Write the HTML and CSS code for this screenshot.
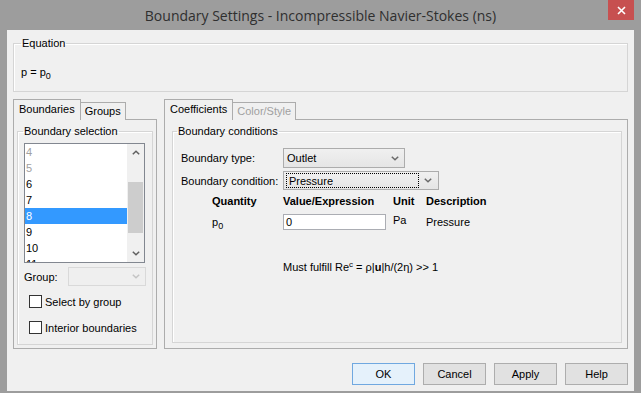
FILE: index.html
```html
<!DOCTYPE html>
<html lang="en">
<head>
    <meta charset="UTF-8">
    <title>Boundary Settings</title>
    <link rel="stylesheet" href="styles.css">
</head>
<body>
<div class="window">
    <div class="titlebar">
        <span class="title">Boundary Settings - Incompressible Navier-Stokes (ns)</span>
        <span class="close">
            <svg width="9" height="9" viewBox="0 0 9 9"><path d="M1 1L8 8M8 1L1 8" stroke="#fff" stroke-width="1.6"/></svg>
        </span>
    </div>

    <div class="client">
        <!-- Equation -->
        <fieldset class="group equation">
            <legend>Equation</legend>
            <div>p = p<sub>0</sub></div>
        </fieldset>

        <div class="panels">
            <!-- Boundaries / Groups -->
            <div class="tabs left">
                <div class="tabbar">
                    <span class="tab active">Boundaries</span>
                    <span class="tab">Groups</span>
                </div>
                <div class="tabpage">
                    <fieldset class="group selection">
                        <legend>Boundary selection</legend>
                        <div class="listbox">
                            <div class="items">
                                <div class="off">4</div>
                                <div class="off">5</div>
                                <div>6</div>
                                <div>7</div>
                                <div class="sel">8</div>
                                <div>9</div>
                                <div>10</div>
                                <div>11</div>
                            </div>
                            <div class="scroll">
                                <span class="sbtn">
                                    <svg width="8" height="5" viewBox="0 0 8 5"><path d="M0.8 4.3L4 1.2L7.2 4.3" fill="none" stroke="#606060" stroke-width="1.5"/></svg>
                                </span>
                                <div class="track"><div class="thumb"></div></div>
                                <span class="sbtn">
                                    <svg width="8" height="5" viewBox="0 0 8 5"><path d="M0.8 0.7L4 3.8L7.2 0.7" fill="none" stroke="#606060" stroke-width="1.5"/></svg>
                                </span>
                            </div>
                        </div>
                        <div class="grouprow">
                            <span>Group:</span>
                            <span class="combo disabled">
                                <span class="arrow">
                                    <svg width="8" height="5" viewBox="0 0 8 5"><path d="M0.8 0.7L4 3.8L7.2 0.7" fill="none" stroke="#c4c4c4" stroke-width="1.5"/></svg>
                                </span>
                            </span>
                        </div>
                        <label class="check"><span class="box"></span>Select by group</label>
                        <label class="check"><span class="box"></span>Interior boundaries</label>
                    </fieldset>
                </div>
            </div>

            <!-- Coefficients / Color/Style -->
            <div class="tabs right">
                <div class="tabbar">
                    <span class="tab active">Coefficients</span>
                    <span class="tab grey">Color/Style</span>
                </div>
                <div class="tabpage">
                    <fieldset class="group conditions">
                        <legend>Boundary conditions</legend>
                        <div class="field">
                            <span class="flabel">Boundary type:</span>
                            <span class="combo type">
                                <span class="value">Outlet</span>
                                <span class="arrow">
                                    <svg width="8" height="5" viewBox="0 0 8 5"><path d="M0.8 0.7L4 3.8L7.2 0.7" fill="none" stroke="#6a6a6a" stroke-width="1.5"/></svg>
                                </span>
                            </span>
                        </div>
                        <div class="field">
                            <span class="flabel">Boundary condition:</span>
                            <span class="combo cond">
                                <span class="value focus">Pressure</span>
                                <span class="arrow">
                                    <svg width="8" height="5" viewBox="0 0 8 5"><path d="M0.8 0.7L4 3.8L7.2 0.7" fill="none" stroke="#6a6a6a" stroke-width="1.5"/></svg>
                                </span>
                            </span>
                        </div>

                        <div class="coeffs">
                            <b>Quantity</b>
                            <b>Value/Expression</b>
                            <b>Unit</b>
                            <b>Description</b>

                            <span class="sym">p<sub>0</sub></span>
                            <span class="input">0</span>
                            <span class="unit">Pa</span>
                            <span class="desc">Pressure</span>
                        </div>

                        <div class="note">Must fulfill Re<sup>c</sup> = ρ|<b>u</b>|h/(2η) &gt;&gt; 1</div>
                    </fieldset>
                </div>
            </div>
        </div>

        <div class="buttons">
            <button class="default">OK</button>
            <button>Cancel</button>
            <button>Apply</button>
            <button>Help</button>
        </div>
    </div>
</div>
</body>
</html>
```

FILE: styles.css
```css
* {
    box-sizing: border-box;
}

body {
    margin: 0;
    font-family: "Liberation Sans", Arial, sans-serif;
    font-size: 11px;
    color: #000;
}

.window {
    position: relative;
    width: 641px;
    height: 393px;
    background: #9d9d9d;
    padding: 0 7px 2px 7px;
    display: flex;
    flex-direction: column;
}

.titlebar {
    height: 30px;
    display: flex;
    align-items: center;
    justify-content: center;
    padding-top: 1px;
    font-family: "Open Sans", "Noto Sans", sans-serif;
    font-size: 14px;
    color: #2f2f2f;
}

.close {
    position: absolute;
    top: 0;
    right: 7px;
    width: 26px;
    height: 20px;
    background: #c75050;
    display: flex;
    align-items: center;
    justify-content: center;
}

.client {
    flex: 1;
    background: #f0f0f0;
    padding: 7px 6px 0 6px;
    display: flex;
    flex-direction: column;
}

sub {
    font-size: 9px;
    vertical-align: -3px;
    line-height: 0;
}

sup {
    font-size: 8px;
    vertical-align: 4px;
    line-height: 0;
}

/* group boxes */
.group {
    margin: 0;
    min-width: 0;
    border: 1px solid #d5d5d5;
    box-shadow: inset 1px 1px 0 #fff;
}

.group legend {
    padding: 0 1px;
    line-height: 13px;
}

.equation {
    padding: 16px 8px 12px 7px;
    line-height: 13px;
}

/* tab panels */
.panels {
    display: flex;
    gap: 7px;
    margin-top: 7px;
    height: 250px;
}

.tabs {
    display: flex;
    flex-direction: column;
}

.tabs.left {
    width: 144px;
}

.tabs.right {
    width: 464px;
}

.tabbar {
    display: flex;
    align-items: flex-end;
    height: 21px;
    margin-bottom: -1px;
    position: relative;
    z-index: 1;
}

.tab {
    height: 18px;
    line-height: 17px;
    padding: 0 4px;
    border: 1px solid #acacac;
    border-bottom: none;
    background: #f0f0f0;
}

.tab + .tab {
    border-left: none;
}

.tab.active {
    height: 21px;
    line-height: 19px;
    padding: 0 5px;
}

.tab.grey {
    color: #a0a0a0;
}

.tabpage {
    flex: 1;
    border: 1px solid #acacac;
    background: #f0f0f0;
    display: flex;
    flex-direction: column;
}

.left .tabpage {
    padding: 5px 3px 3px 3px;
}

.right .tabpage {
    padding: 5px 5px 5px 7px;
}

.tabpage .group {
    flex: 1;
}

/* boundary selection */
.selection {
    padding: 5px 6px 0 6px;
}

.selection legend {
    margin-left: -1px;
}

.listbox {
    width: 121px;
    height: 120px;
    border: 1px solid #828790;
    background: #fff;
    display: flex;
}

.items {
    flex: 1;
    overflow: hidden;
}

.items div {
    height: 16px;
    line-height: 16px;
    padding-left: 1px;
}

.items .off {
    color: #a0a0a0;
}

.items .sel {
    background: #3399ff;
    color: #fff;
}

.scroll {
    width: 17px;
    background: #f0f0f0;
    display: flex;
    flex-direction: column;
}

.sbtn {
    height: 17px;
    display: flex;
    align-items: center;
    justify-content: center;
}

.track {
    flex: 1;
    padding: 21px 1px 0 1px;
}

.thumb {
    height: 51px;
    background: #cdcdcd;
}

.grouprow {
    display: flex;
    align-items: center;
    gap: 10px;
    margin-top: 4px;
}

.combo {
    display: flex;
    align-items: center;
    border: 1px solid #acacac;
    background: linear-gradient(#f0f0f0, #e5e5e5);
}

.combo .arrow {
    margin-left: auto;
    width: 18px;
    display: flex;
    justify-content: center;
}

.combo.disabled {
    width: 81px;
    height: 19px;
    border-color: #d9d9d9;
    background: #efefef;
}

.check {
    display: flex;
    align-items: center;
    gap: 3px;
    margin: 9px 0 0 5px;
    height: 13px;
}

.check + .check {
    margin-top: 13px;
}

.box {
    width: 13px;
    height: 13px;
    border: 1px solid #333;
    background: #fff;
}

/* boundary conditions */
.conditions {
    padding: 0 8px;
}

.conditions legend {
    margin-left: -4px;
}

.field {
    display: flex;
    align-items: center;
    margin-top: 3px;
}

.field:first-of-type {
    margin-top: 10px;
}

.flabel {
    width: 102px;
}

.combo .value {
    padding-left: 3px;
    line-height: 14px;
}

.combo.type {
    width: 122px;
    height: 20px;
}

.combo.cond {
    width: 156px;
    height: 19px;
    padding: 1px;
}

.combo .focus {
    flex: 1;
    height: 15px;
    padding-left: 2px;
    border: 1px dotted #000;
    margin-left: 1px;
}

.coeffs {
    display: grid;
    grid-template-columns: 71px 110px 33px auto;
    grid-template-rows: 13px 16px;
    row-gap: 6px;
    align-items: center;
    margin-top: 5px;
    padding-left: 31px;
    line-height: 13px;
}

.coeffs .unit {
    align-self: start;
}

.input {
    width: 103px;
    height: 16px;
    border: 1px solid #abadb3;
    background: #fff;
    padding-left: 2px;
    line-height: 14px;
}

.note {
    margin: 31px 0 0 102px;
    line-height: 13px;
}

/* dialog buttons */
.buttons {
    display: flex;
    justify-content: flex-end;
    gap: 8px;
    margin-top: 14px;
}

button {
    width: 63px;
    height: 22px;
    padding: 0;
    border: 1px solid #adadad;
    background: #e1e1e1;
    font-family: "Liberation Sans", Arial, sans-serif;
    font-size: 11px;
    color: #000;
}

button.default {
    border-color: #70a8e0;
    background: #e5f1fb;
}
```
